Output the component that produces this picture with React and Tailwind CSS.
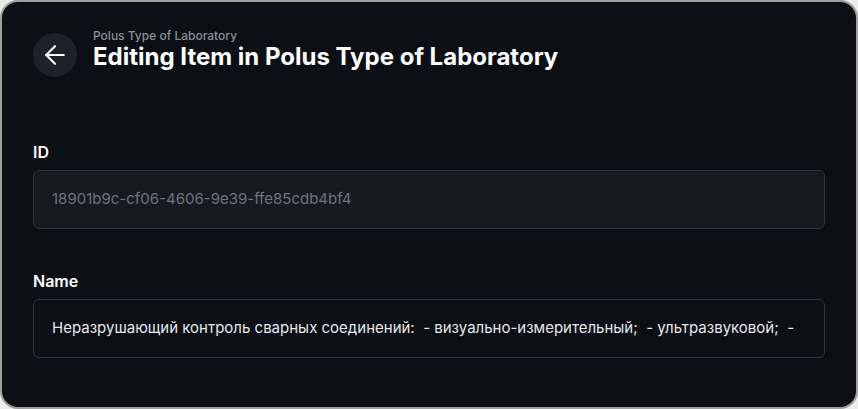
import { ArrowLeft } from 'lucide-react'

const Field = ({ label, value, disabled }) => (
    <div className="flex flex-col">
        <label className="text-[16px] leading-5 font-semibold text-white mb-2">
            {label}
        </label>
        <div
            className={
                'h-[59px] flex items-center px-[18px] rounded-md border border-[#2e333b] text-[15px] whitespace-pre overflow-hidden ' +
                (disabled
                    ? 'bg-[#161a20] text-[#6b7280]'
                    : 'bg-[#0c0f16] text-[#e6e8ec]')
            }>
            {value}
        </div>
    </div>
)

export default function App() {
    return (
        <div
            className="w-[858px] h-[409px] bg-[#ececec]"
            style={{ fontFamily: 'Inter, "Noto Sans", sans-serif' }}>
            <div className="h-full rounded-[18px] border-2 border-[#a19e9e] bg-[#0c0f16] px-[31px] pt-[31px]">
                {/* header */}
                <div className="flex items-center gap-4">
                    <button className="w-11 h-11 rounded-full bg-[#1d2129] flex items-center justify-center text-white">
                        <ArrowLeft size={30} strokeWidth={1.7} />
                    </button>
                    <div className="flex flex-col -mt-[11px]">
                        <span className="text-[12px] leading-[14px] font-medium text-[#8b8f97]">
                            Polus Type of Laboratory
                        </span>
                        <h1 className="text-[24px] leading-[28px] font-bold text-white">
                            Editing Item in Polus Type of Laboratory
                        </h1>
                    </div>
                </div>

                <div className="mt-[65px] flex flex-col gap-[42px]">
                    <Field
                        label="ID"
                        value="18901b9c-cf06-4606-9e39-ffe85cdb4bf4"
                        disabled
                    />
                    <Field
                        label="Name"
                        value="Неразрушающий контроль сварных соединений:  - визуально-измерительный;  - ультразвуковой;  -"
                    />
                </div>
            </div>
        </div>
    )
}
